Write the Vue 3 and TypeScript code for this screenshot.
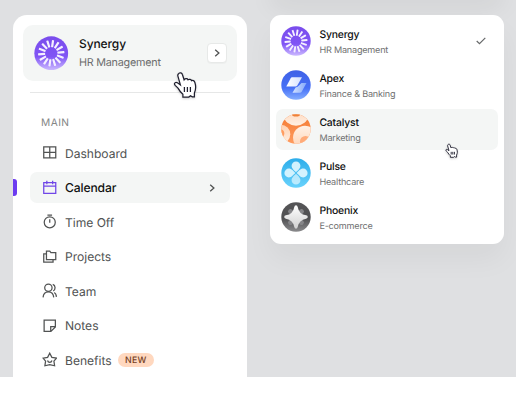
<script setup lang="ts">
interface Company {
  id: string
  name: string
  field: string
}

const companies: Company[] = [
  { id: 'synergy', name: 'Synergy', field: 'HR Management' },
  { id: 'apex', name: 'Apex', field: 'Finance & Banking' },
  { id: 'catalyst', name: 'Catalyst', field: 'Marketing' },
  { id: 'pulse', name: 'Pulse', field: 'Healthcare' },
  { id: 'phoenix', name: 'Phoenix', field: 'E-commerce' },
]

const menu: { label: string; paths: string[]; badge?: string }[] = [
  { label: 'Dashboard', paths: ['M1.8 2H14.2V13.4H1.8Z M8 2V13.4 M1.8 7.7H14.2'] },
  { label: 'Calendar', paths: ['M1.8 2.8H14.2V13.8H1.8Z M1.8 6.4H14.2 M5 .8V4.5 M11 .8V4.5'] },
  { label: 'Time Off', paths: ['M13.7 8.6A5.7 5.7 0 1 1 2.3 8.6A5.7 5.7 0 0 1 13.7 8.6Z M8 5.3V9 M5.6 1.2H10.4'] },
  { label: 'Projects', paths: ['M4.6 2.2H8L9.2 3.8H14.2V11H4.6Z', 'M4.6 5H1.8V13.6H11.4V11'] },
  { label: 'Team', paths: ['M10.4 4.9A3.8 3.8 0 1 1 2.8 4.9A3.8 3.8 0 0 1 10.4 4.9Z', 'M1.1 14.8C1.7 7.2 11.5 7.2 12.1 14.8', 'M11.1 1.4C14.3 2.4 14 7 11.6 8.3 M12.7 9.7C14.1 10.7 14.8 12.2 14.9 14.3'] },
  { label: 'Notes', paths: ['M2.2 2.2H13.8V9.2L9.2 13.8H2.2Z M13.8 9H9V13.6'] },
  { label: 'Benefits', paths: ['M8 1.2L10.2 5.5L14.9 6.3L12.3 9.4L13 14.2L8 13.1L3 14.2L3.7 9.4L1.1 6.3L5.8 5.5Z', 'M5.7 8.8C6.4 11.3 9.6 11.3 10.3 8.8'], badge: 'NEW' },
]

const rays = Array.from({ length: 14 }, (_, i) => (i * 360) / 14 + 8)
</script>

<template>
  <main class="page">
    <svg class="logo-library" aria-hidden="true">
      <defs>
        <linearGradient id="violet" x2="0" y2="1"><stop stop-color="#7a4dec" /><stop offset=".6" stop-color="#8054f5" /><stop offset="1" stop-color="#ccbaff" /></linearGradient>
        <linearGradient id="blue" x2="0" y2="1"><stop stop-color="#3f61e6" /><stop offset=".6" stop-color="#4670f6" /><stop offset="1" stop-color="#85aeff" /></linearGradient>
        <linearGradient id="paper" x2="1" y2="0"><stop stop-color="#fff" /><stop offset="1" stop-color="#d3e0ff" /></linearGradient>
        <linearGradient id="paper-low" x2="1" y2="0"><stop stop-color="#d2e1ff" /><stop offset="1" stop-color="#83a9fa" /></linearGradient>
        <linearGradient id="orange" x2="0" y2="1"><stop stop-color="#f47a32" /><stop offset="1" stop-color="#ff9c60" /></linearGradient>
        <linearGradient id="peach" x2="0" y2="1"><stop stop-color="#ffd1b1" /><stop offset="1" stop-color="#fff0e4" /></linearGradient>
        <linearGradient id="peach-right" x2="0" y2="1"><stop stop-color="#fff1e6" /><stop offset="1" stop-color="#ffd1b1" /></linearGradient>
        <linearGradient id="cyan" x2="0" y2="1"><stop stop-color="#2dadea" /><stop offset="1" stop-color="#68d2fc" /></linearGradient>
        <linearGradient id="graphite" x2="0" y2="1"><stop stop-color="#555557" /><stop offset=".55" stop-color="#505052" /><stop offset="1" stop-color="#8b8b8d" /></linearGradient>
        <linearGradient id="silver" x2="0" y2="1"><stop stop-color="#fff" /><stop offset="1" stop-color="#d0d0d0" /></linearGradient>
        <clipPath id="disc"><circle cx="15" cy="15" r="14.7" /></clipPath>
      </defs>
      <symbol id="synergy" viewBox="0 0 30 30">
        <circle cx="15" cy="15" r="14.7" fill="url(#violet)" />
        <rect v-for="angle in rays" :key="angle" x="14.05" y="3.5" width="1.9" height="6.2" rx=".4" fill="#f5f0ff" :transform="`rotate(${angle} 15 15)`" />
      </symbol>
      <symbol id="apex" viewBox="0 0 30 30">
        <circle cx="15" cy="15" r="14.7" fill="url(#blue)" />
        <path d="M20.5 13H25.5L20.7 21.7Q20.1 22.8 18.8 22.8H11.5L14.6 17.6Q17 17.2 18 15.5Z" fill="url(#paper-low)" />
        <path d="M11 7.3H21L16.3 15.5Q15.7 16.5 14.4 16.5H5.3L9.7 8.2Q10.2 7.3 11 7.3Z" fill="url(#paper)" />
      </symbol>
      <symbol id="catalyst" viewBox="0 0 30 30">
        <g clip-path="url(#disc)">
          <rect width="30" height="30" fill="url(#orange)" />
          <ellipse cx="15" cy="2" rx="12" ry="9.7" fill="url(#peach)" /><ellipse cx="15" cy=".5" rx="4" ry="2.1" fill="#ef8139" />
          <circle cx="-.2" cy="20.2" r="9.5" fill="url(#peach)" /><circle cx="-.7" cy="19.5" r="4" fill="#ff9d61" />
          <circle cx="24" cy="23.8" r="12" fill="url(#peach-right)" /><circle cx="24.5" cy="27.5" r="5.5" fill="#ffab79" />
        </g>
      </symbol>
      <symbol id="pulse" viewBox="0 0 30 30">
        <circle cx="15" cy="15" r="14.7" fill="url(#cyan)" />
        <path v-for="angle in [0, 90, 180, 270]" :key="angle" d="M15 14.3C13.4 12.5 10.6 10.7 10.6 7.8A4.4 4.4 0 0 1 19.4 7.8C19.4 10.7 16.6 12.5 15 14.3Z" fill="#e7f9ff" :opacity="angle === 180 ? .68 : .87" :transform="`rotate(${angle} 15 15)`" />
      </symbol>
      <symbol id="phoenix" viewBox="0 0 30 30">
        <circle cx="15" cy="15" r="14.7" fill="url(#graphite)" />
        <g transform="rotate(45 15 15)" fill="#858588"><rect x="12.6" y="4.8" width="4.8" height="20.4" rx="2.4" /><rect x="4.8" y="12.6" width="20.4" height="4.8" rx="2.4" /></g>
        <path d="M15 3.2Q16.4 3.2 16.7 4.9Q17.9 12.1 25.1 13.3Q26.8 13.6 26.8 15Q26.8 16.4 25.1 16.7Q17.9 17.9 16.7 25.1Q16.4 26.8 15 26.8Q13.6 26.8 13.3 25.1Q12.1 17.9 4.9 16.7Q3.2 16.4 3.2 15Q3.2 13.6 4.9 13.3Q12.1 12.1 13.3 4.9Q13.6 3.2 15 3.2Z" fill="url(#silver)" />
      </symbol>
    </svg>

    <section class="canvas">
      <aside class="sidebar">
        <button class="workspace">
          <svg class="workspace-logo" viewBox="0 0 30 30"><use href="#synergy" /></svg>
          <span class="workspace-copy"><strong>Synergy</strong><span>HR Management</span></span>
          <span class="expand"><svg class="chevron" viewBox="0 0 8 8"><path d="M2.2 .7L5.9 4L2.2 7.3" /></svg></span>
        </button>
        <hr />
        <h2>MAIN</h2>
        <nav>
          <a v-for="item in menu" :key="item.label" class="nav-item" :class="{ active: item.label === 'Calendar' }">
            <svg class="nav-icon" viewBox="0 0 16 16"><path v-for="path in item.paths" :key="path" :d="path" /></svg>
            <span class="nav-label">{{ item.label }}</span>
            <span v-if="item.badge" class="new-badge">{{ item.badge }}</span>
            <svg v-if="item.label === 'Calendar'" class="chevron nav-chevron" viewBox="0 0 8 8"><path d="M2.2 .7L5.9 4L2.2 7.3" /></svg>
          </a>
        </nav>
      </aside>
      <section class="company-list">
        <button v-for="company in companies" :key="company.id" class="company" :class="{ hovered: company.id === 'catalyst' }">
          <svg class="company-logo" viewBox="0 0 30 30"><use :href="`#${company.id}`" /></svg>
          <span class="company-copy"><strong>{{ company.name }}</strong><span>{{ company.field }}</span></span>
          <svg v-if="company.id === 'synergy'" class="check" viewBox="0 0 10 8"><path d="M.7 4L3.5 6.6L9.3 .9" /></svg>
        </button>
      </section>
      <svg v-for="size in ['large', 'small']" :key="size" class="cursor" :class="size" viewBox="0 0 24 28" aria-hidden="true">
        <path d="M5.8 2.4C7.1 1.2 8.9 1.8 9.4 3.5L11.1 8.8C12.3 7.2 14.5 7.5 15 8.7C16.2 7.8 18.1 8.4 18.5 9.6C19.8 9 21.3 9.8 21.8 11.2C23.3 15.6 23 18.4 21.4 22V25.8H19.3L17.5 24.7L15.8 26.1H9.9V23.2C8.1 21.6 6.4 19.8 5 17.1L2.2 14.4C.4 12.3 2.5 10.5 4.8 12L7.4 13.9L4.9 5.1C4.6 4.1 4.9 3.1 5.8 2.4Z" />
        <path d="M11.4 16V21 M14.4 16V21 M17.4 16V21" />
      </svg>
    </section>
  </main>
</template>

<style>
body { background: #fff; }
</style>

<style scoped>
.page { width: 516px; height: 403px; background: #fff; font-family: Inter, "Liberation Sans", sans-serif; text-rendering: geometricPrecision; }
.logo-library { position: absolute; width: 0; height: 0; }
.canvas { position: relative; display: flex; align-items: flex-start; gap: 23px; box-sizing: border-box; height: 377px; padding: 15px 12px 0 13px; overflow: hidden; background: #dfe0e2; }
.canvas::before { content: ""; position: absolute; top: -20px; left: 270px; width: 234px; height: 18px; border-radius: 11px; box-shadow: 0 8px 24px #00000014; }
button { appearance: none; margin: 0; border: 0; font-family: inherit; text-align: left; text-rendering: inherit; }
.sidebar { box-sizing: border-box; width: 234px; height: 370px; padding: 10px 10px 0; border-radius: 14px 14px 0 0; background: #fff; }
.workspace { display: flex; align-items: center; width: 214px; height: 55.5px; padding: 0 10px 0 11px; border-radius: 10px; background: #f4f6f5; }
.workspace-logo { width: 34.5px; height: 34.5px; flex: none; }
.workspace-copy { display: flex; flex: 1; flex-direction: column; padding: 2px 0 0 10.5px; color: #6d6e6e; font-size: 10.8px; line-height: 18.5px; letter-spacing: -.24px; }
.workspace-copy strong { color: #101111; font-size: 12px; font-weight: 500; line-height: 18.5px; letter-spacing: -.1px; }
.expand { display: grid; place-items: center; box-sizing: border-box; width: 20px; height: 20px; border: 1px solid #e7e9e8; border-radius: 4px; background: #fff; box-shadow: 0 1px 1px #00000008; }
.chevron { width: 8px; height: 8px; fill: none; stroke: #505252; stroke-width: 1.3; }
hr { width: 200px; height: 1px; margin: 11.5px 7px 0; border: 0; background: #e6e7e7; }
h2 { margin: 22.5px 0 0 18px; color: #858686; font-size: 10.2px; font-weight: 400; line-height: 14px; letter-spacing: .45px; }
nav { display: flex; flex-direction: column; gap: 3.5px; padding: 8px 7px 0; }
.nav-item { position: relative; display: flex; align-items: center; box-sizing: border-box; height: 31px; padding: 0 11.5px; border-radius: 7px; color: #515353; font-size: 12.1px; font-weight: 400; letter-spacing: -.03px; }
.nav-icon { width: 15.5px; height: 15.5px; margin-right: 8px; fill: none; stroke: currentColor; stroke-width: 1.3; }
.active { color: #101111; background: #f4f6f5; }
.active .nav-label { font-weight: 500; letter-spacing: -.12px; }
.active .nav-icon { stroke: #7046e8; }
.active::before { content: ""; position: absolute; left: -17px; top: 7px; width: 3.6px; height: 17px; border-radius: 0 3px 3px 0; background: #6c3cf0; }
.nav-chevron { margin-left: auto; margin-right: 2.5px; }
.new-badge { display: grid; place-items: center; width: 36.5px; height: 14px; margin-left: 6px; border-radius: 8px; color: #74401f; background: #ffd8bf; font-size: 8.8px; font-weight: 500; letter-spacing: .25px; }
.company-list { position: relative; box-sizing: border-box; width: 234px; height: 229px; padding: 5.5px 6px; border-radius: 11px; background: #fff; box-shadow: 0 16px 28px #0000000b; }
.company { display: flex; align-items: center; width: 222px; height: 41px; margin-bottom: 3.1px; padding: 0 5px; border-radius: 7px; background: #fff; }
.company-logo { width: 30px; height: 30px; flex: none; }
.company-copy { display: flex; flex-direction: column; padding: 3.6px 0 0 8.4px; color: #707171; font-size: 9.1px; line-height: 16px; letter-spacing: -.21px; }
.company-copy strong { color: #101111; font-size: 10.4px; font-weight: 500; line-height: 16px; letter-spacing: -.18px; }
.company.hovered { background: #f4f6f5; }
.check { width: 10px; height: 8px; margin-left: auto; margin-right: 7px; fill: none; stroke: #666869; stroke-width: 1.2; }
.cursor { position: absolute; fill: #fff; stroke: #20202f; stroke-width: 1.25; filter: drop-shadow(0 1px 1px #0003); }
.large { left: 173px; top: 71px; width: 24px; height: 28px; }
.small { left: 444.5px; top: 142.5px; width: 13px; height: 15.5px; stroke-width: 1.7; }
</style>
